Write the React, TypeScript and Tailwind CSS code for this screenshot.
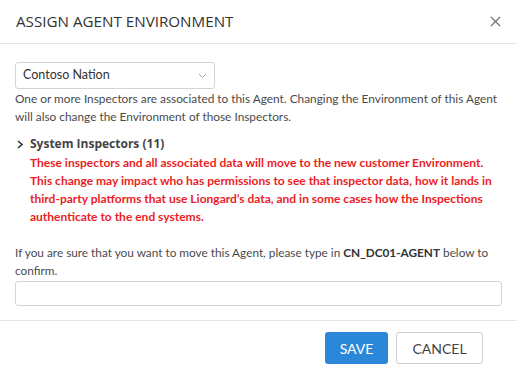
import React from "react";

const warning = [
  "These inspectors and all associated data will move to the new customer Environment.",
  "This change may impact who has permissions to see that inspector data, how it lands in",
  "third-party platforms that use Liongard’s data, and in some cases how the Inspections",
  "authenticate to the end systems.",
];

export default function App() {
  return (
    <div className="w-[517px] h-[373px] bg-white text-[#4a4a4a] font-['Lato',sans-serif]">
      {/* Header */}
      <div className="flex items-center justify-between h-[44px] pl-[16px] pr-[16px] border-b border-[#e5e5e5]">
        <h1 className="text-[15.2px] text-[#333] font-['Open_Sans',sans-serif] whitespace-nowrap">
          ASSIGN AGENT ENVIRONMENT
        </h1>
        <button className="text-[#777]">
          <svg width="11" height="11" viewBox="0 0 11 11" fill="none" stroke="currentColor" strokeWidth="1.4">
            <path d="M1 1l9 9M10 1l-9 9" />
          </svg>
        </button>
      </div>

      {/* Body */}
      <div className="px-[15px] pt-[18px] h-[277px] border-b border-[#e5e5e5]">
        <div className="flex items-center justify-between w-[200px] h-[27px] pl-[7px] pr-[7px] border border-[#d4d4d4] rounded-[3px] text-[12.5px] text-[#333]">
          <span>Contoso Nation</span>
          <svg width="9" height="6" viewBox="0 0 9 6" fill="none" stroke="#999" strokeWidth="0.9">
            <path d="M1 1l3.5 3.5L8 1" />
          </svg>
        </div>
        <p className="text-[11.85px] leading-[18px] mt-[1px] whitespace-nowrap">
          One or more Inspectors are associated to this Agent. Changing the Environment of this Agent
          <br />
          will also change the Environment of those Inspectors.
        </p>

        <div className="flex mt-[9px]">
          <svg className="mt-[5px] ml-[2px] mr-[6px] shrink-0" width="7" height="9" viewBox="0 0 7 9" fill="none" stroke="#333" strokeWidth="1.6">
            <path d="M1 1l4 3.5L1 8" />
          </svg>
          <div>
            <div className="text-[12px] font-bold text-[#444] font-['Open_Sans',sans-serif] leading-[18px]">
              System Inspectors (11)
            </div>
            <div className="text-[12px] leading-[18px] font-bold text-[#ec1c24] mt-[1px] whitespace-nowrap">
              {warning.map((line) => (
                <div key={line}>{line}</div>
              ))}
            </div>
          </div>
        </div>

        <p className="text-[11.8px] leading-[18px] mt-[18px] whitespace-nowrap">
          If you are sure that you want to move this Agent, please type in{" "}
          <span className="font-bold text-[#333]">CN_DC01-AGENT</span> below to
          <br />
          confirm.
        </p>
        <input className="block w-full h-[25px] mt-[1px] border border-[#d4d4d4] rounded-[3px] outline-none" />
      </div>

      {/* Footer */}
      <div className="flex justify-end gap-[8px] pt-[11px] pr-[34px]">
        <button className="w-[63px] h-[32px] rounded-[3px] bg-[#2b87d8] text-white text-[14px]">SAVE</button>
        <button className="w-[87px] h-[32px] rounded-[3px] border border-[#cfcfcf] bg-white text-[#444] text-[14px]">
          CANCEL
        </button>
      </div>
    </div>
  );
}
